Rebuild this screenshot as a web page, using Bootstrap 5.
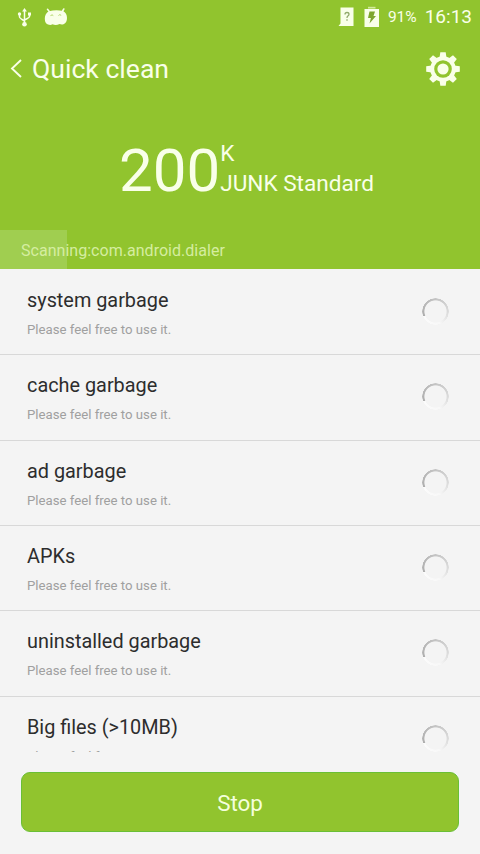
<!DOCTYPE html>
<html lang="en">
<head>
<meta charset="utf-8">
<meta name="viewport" content="width=device-width, initial-scale=1">
<title>Quick clean</title>
<link href="https://cdn.jsdelivr.net/npm/bootstrap@5.3.0/dist/css/bootstrap.min.css" rel="stylesheet">
<style>
  body { font-family: Roboto, "Noto Sans", sans-serif; background: #f4f4f4; }
  .screen { width: 480px; height: 854px; }
  .hero { background: #91c42e; color: #f9ffe9; height: 269px; }
  .status { height: 34px; padding: 0 8px 0 17px; }
  .droid { margin-left: 12px; }
  .pct { font-size: 15.5px; line-height: 36px; margin: 0 8px 0 7px; }
  .clock { font-size: 19px; line-height: 36px; }
  .titlebar { height: 70px; padding: 0 19px 0 10px; }
  .heading { font-size: 26.6px; line-height: 70px; margin-left: 9px; }
  .gear { margin-bottom: 1px; }
  .total { height: 126px; padding: 34px 0 0 119px; }
  .amount { font-size: 60px; line-height: 66px; }
  .unit { font-size: 22.6px; line-height: 30px; padding-top: 1px; }
  .scan { height: 39px; background: transparent; border-radius: 0; }
  .scan .progress-bar { width: 14%; background: #a0ce50; }
  .scan-text { font-size: 16px; line-height: 41px; left: 21px; top: 0; color: #d5eda0; letter-spacing: .03px; }
  .rows { height: 482.5px; padding-top: 1px; }
  .item { height: 85.33px; flex: none; padding: 17px 31px 0 27px; border-bottom: 1px solid #d8d8d8; }
  .item-name { font-size: 19.85px; line-height: 27px; color: #2d2d2d; }
  .item-note { font-size: 13.2px; line-height: 18px; margin-top: 7px; color: #a0a0a0; }
  .ring { width: 27px; height: 27px; margin-top: 11px; border-radius: 50%;
    background: conic-gradient(from 248deg, #adadad, #c4c4c4 32%, #dedede 60%, #f8f8f8 76%, #fbfbfb);
    -webkit-mask: radial-gradient(circle, transparent 10.7px, #000 11.5px, #000 13px, transparent 13.5px);
    mask: radial-gradient(circle, transparent 10.7px, #000 11.5px, #000 13px, transparent 13.5px); }
  .footer-area { padding: 20.5px 21px 0; }
  .stop { height: 60px; font-size: 22.4px; line-height: 60px; padding: 0; color: #f4ffdc; background: #91c42e; border: 1.5px solid #6abf35; border-radius: 9px; }
  .stop:hover { color: #f4ffdc; background: #88b92a; }
</style>
<script src="https://cdn.jsdelivr.net/npm/bootstrap@5.3.0/dist/js/bootstrap.bundle.min.js"></script>
</head>
<body>
<div class="screen d-flex flex-column overflow-hidden">
  <header class="hero flex-shrink-0">
    <div class="status d-flex align-items-center">
      <svg width="15" height="21" viewBox="0 0 15 21" fill="none" stroke="#f9ffe9" stroke-width="1.5">
        <path d="M7.500 3v14M2.500 7v3q0 1 5 4M12.500 7v2.500q0 1-5 3.500"/>
        <path d="M7.500 1l2.400 3.500H5.100z" fill="#f9ffe9" stroke="none"/>
        <circle cx="7.500" cy="17.300" r="2.300" fill="#f9ffe9" stroke="none"/>
        <circle cx="2.500" cy="7" r="1.700" fill="#f9ffe9" stroke="none"/>
        <path d="M11 5.500h3v3h-3z" fill="#f9ffe9" stroke="none"/>
      </svg>
      <svg class="droid" width="24" height="18" viewBox="0 0 24 18">
        <path d="M3.500 1.300l2 2.500M19.800 1l-1.800 3" stroke="#f9ffe9" stroke-width="1.500" stroke-linecap="round"/>
        <path d="M5 3.200Q12 1.500 19 3q4 2 4 7 0 5-3.500 6.200-2 .6-4-.2-3.500 1.600-7 .3-2 1.200-4.500.2Q.8 15.500.8 10.500.8 5.500 5 3.200z" fill="#f9ffe9"/>
        <path d="M6.500 7.600l1.600-.7 1.200.7M14.500 7.500l1.200-.8 1.500.6" fill="none" stroke="#a9d158" stroke-width=".9"/>
      </svg>
      <div class="d-flex align-items-center ms-auto">
        <svg width="17" height="20" viewBox="0 0 17 20">
          <path d="M2.500.5H15.500V19H.5l2-2.500z" fill="#f9ffe9"/>
          <path d="M7 7.500q0-2 2-2t2 1.800q0 1-1.100 1.700-.9.700-.9 2M9 12.300v1.400" fill="none" stroke="#91a96b" stroke-width="1.300"/>
        </svg>
        <svg class="ms-2" width="18" height="22" viewBox="0 0 18 22">
          <path d="M5 .8h7.500V2.500H5z" fill="#d3eb9c"/>
          <path d="M1.500 3H16v18H1.500z" fill="#f9ffe9"/>
          <path d="M6.500 5.500h5.500L10.500 10H13l-6.500 7.500 1.400-5.500H5z" fill="#7da62d"/>
        </svg>
        <span class="pct">91%</span>
        <span class="clock">16:13</span>
      </div>
    </div>
    <div class="titlebar d-flex align-items-center">
      <svg width="13" height="20" viewBox="0 0 13 20" fill="none" stroke="#f9ffe9" stroke-width="1.900"><path d="M11 1L2 9.500l9 8.500"/></svg>
      <h1 class="heading fw-normal mb-0">Quick clean</h1>
      <svg class="gear ms-auto" width="36" height="36" viewBox="-18 -18 36 36" fill="#f9ffe9">
        <path id="tooth" d="M-3.500-11L-2.700-16.800h5.400L3.500-11z"/>
        <use href="#tooth" transform="rotate(45)"/><use href="#tooth" transform="rotate(90)"/><use href="#tooth" transform="rotate(135)"/>
        <use href="#tooth" transform="rotate(180)"/><use href="#tooth" transform="rotate(225)"/><use href="#tooth" transform="rotate(270)"/><use href="#tooth" transform="rotate(315)"/>
        <circle r="12.800"/>
        <circle r="8.800" fill="#91c42e"/>
        <circle r="5.600"/>
      </svg>
    </div>
    <div class="total d-flex align-items-start">
      <span class="amount">200</span>
      <div class="unit"><div>K</div><div>JUNK Standard</div></div>
    </div>
    <div class="scan progress position-relative">
      <div class="progress-bar"></div>
      <div class="scan-text position-absolute">Scanning:com.android.dialer</div>
    </div>
  </header>
  <main class="rows flex-shrink-0 overflow-hidden d-flex flex-column" id="rows"></main>
  <footer class="footer-area"><button type="button" class="btn stop w-100 d-block">Stop</button></footer>
</div>
<script>
  document.getElementById('rows').innerHTML =
    ['system garbage', 'cache garbage', 'ad garbage', 'APKs', 'uninstalled garbage', 'Big files (&gt;10MB)'].map(name =>
      `<div class="item d-flex justify-content-between align-items-start">
        <div><div class="item-name">${name}</div><div class="item-note">Please feel free to use it.</div></div>
        <div class="ring" role="status"></div>
      </div>`).join('');
</script>
</body>
</html>
